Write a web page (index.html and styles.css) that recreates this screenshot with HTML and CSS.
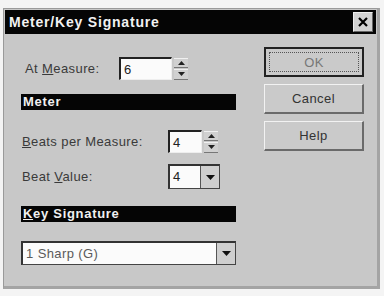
FILE: index.html
```html
<!DOCTYPE html>
<html lang="en">
<head>
    <meta charset="UTF-8">
    <title>Meter/Key Signature</title>
    <link rel="stylesheet" href="styles.css">
</head>
<body>
    <div class="dialog">
        <div class="title-bar">
            <span class="title">Meter/Key Signature</span>
            <span class="close-btn">
                <svg width="10" height="10" viewBox="0 0 10 10"><path d="M1 1 L9 9 M9 1 L1 9" stroke="#000" stroke-width="2.2"/></svg>
            </span>
        </div>

        <div class="content">
            <div class="left-col">
                <div class="row row-measure">
                    <span class="label label-measure">At <u>M</u>easure:</span>
                    <span class="field field-measure">6</span>
                    <span class="spinner">
                        <span class="spin-half"><svg width="7" height="4" viewBox="0 0 7 4"><path d="M0 4 L3.5 0 L7 4 Z" fill="#222"/></svg></span>
                        <span class="spin-half"><svg width="7" height="4" viewBox="0 0 7 4"><path d="M0 0 L3.5 4 L7 0 Z" fill="#222"/></svg></span>
                    </span>
                </div>

                <div class="group-bar bar-meter">Meter</div>

                <div class="row row-beats">
                    <span class="label label-wide"><u>B</u>eats per Measure:</span>
                    <span class="field field-small">4</span>
                    <span class="spinner">
                        <span class="spin-half"><svg width="7" height="4" viewBox="0 0 7 4"><path d="M0 4 L3.5 0 L7 4 Z" fill="#222"/></svg></span>
                        <span class="spin-half"><svg width="7" height="4" viewBox="0 0 7 4"><path d="M0 0 L3.5 4 L7 0 Z" fill="#222"/></svg></span>
                    </span>
                </div>

                <div class="row row-value">
                    <span class="label label-wide">Beat <u>V</u>alue:</span>
                    <span class="combo combo-small">
                        <span class="combo-text">4</span>
                        <span class="drop-btn"><svg width="9" height="5" viewBox="0 0 9 5"><path d="M0 0 L4.5 5 L9 0 Z" fill="#111"/></svg></span>
                    </span>
                </div>

                <div class="group-bar bar-key"><u>K</u>ey Signature</div>

                <div class="combo combo-wide">
                    <span class="combo-text key-text">1 Sharp (G)</span>
                    <span class="drop-btn"><svg width="9" height="5" viewBox="0 0 9 5"><path d="M0 0 L4.5 5 L9 0 Z" fill="#111"/></svg></span>
                </div>
            </div>

            <div class="right-col">
                <div class="btn btn-default"><span class="focus-ring">OK</span></div>
                <div class="btn">Cancel</div>
                <div class="btn">Help</div>
            </div>
        </div>
    </div>
</body>
</html>
```

FILE: styles.css
```css
body {
    margin: 0;
    background: #f4f4f4;
    font-family: "Liberation Sans", Arial, sans-serif;
    font-size: 13px;
    letter-spacing: 0.4px;
    color: #333;
}

.dialog {
    margin: 8px 4px 0 3px;
    height: 281px;
    background: #c8c8c8;
    border: 1px solid #9a9a9a;
    border-right: 3px solid #a4a4a4;
    border-bottom: 3px solid #a4a4a4;
    box-sizing: border-box;
    padding: 1px;
}

.title-bar {
    height: 24px;
    background: #050505;
    display: flex;
    align-items: center;
    justify-content: space-between;
    padding: 0 3px 0 4px;
}

.title {
    color: #f2f2f2;
    font-weight: bold;
    font-size: 14px;
    letter-spacing: 0.8px;
}

.close-btn {
    width: 18px;
    height: 18px;
    background: #d2d2d2;
    border: 1px solid #eee;
    border-right-color: #666;
    border-bottom-color: #666;
    display: flex;
    align-items: center;
    justify-content: center;
}

.content {
    display: flex;
    padding: 0 0 0 16px;
}

.left-col {
    width: 215px;
    display: flex;
    flex-direction: column;
}

.right-col {
    margin-left: 28px;
    padding-top: 13px;
    display: flex;
    flex-direction: column;
    gap: 7px;
}

.row {
    display: flex;
    align-items: center;
}

.row-measure {
    margin-top: 23px;
}

.label {
    color: #3a3a3a;
}

.label u {
    text-decoration-thickness: 1px;
}

.label-measure {
    width: 94px;
    padding-left: 4px;
}

.label-wide {
    width: 146px;
    padding-left: 1px;
}

.field {
    height: 23px;
    background: #fbfbfb;
    border-top: 2px solid #222;
    border-left: 2px solid #222;
    border-right: 1px solid #eee;
    border-bottom: 1px solid #eee;
    box-sizing: border-box;
    padding: 3px 0 0 3px;
    color: #222;
}

.field-measure {
    width: 53px;
}

.field-small {
    width: 34px;
}

.spinner {
    width: 14px;
    height: 22px;
    margin-left: 2px;
    display: flex;
    flex-direction: column;
    gap: 1px;
}

.spin-half {
    flex: 1;
    background: #d0d0d0;
    border-top: 1px solid #f0f0f0;
    border-bottom: 1px solid #777;
    display: flex;
    align-items: center;
    justify-content: center;
}

.group-bar {
    height: 16px;
    background: #050505;
    color: #f0f0f0;
    font-weight: bold;
    font-size: 13px;
    letter-spacing: 0.7px;
    line-height: 16px;
    padding-left: 2px;
}

.bar-meter {
    margin-top: 14px;
}

.row-beats {
    margin-top: 20px;
}

.row-value {
    margin-top: 11px;
}

.bar-key {
    margin-top: 17px;
}

.combo {
    height: 25px;
    display: flex;
    background: #fbfbfb;
    border-top: 2px solid #333;
    border-left: 2px solid #333;
    border-right: 1px solid #444;
    border-bottom: 1px solid #444;
    box-sizing: border-box;
}

.combo-small {
    width: 52px;
}

.combo-wide {
    margin-top: 19px;
    height: 24px;
}

.combo-text {
    flex: 1;
    padding: 3px 0 0 3px;
    color: #222;
}

.key-text {
    color: #5a5a5a;
}

.drop-btn {
    width: 18px;
    background: #cfcfcf;
    border-left: 1px solid #555;
    display: flex;
    align-items: center;
    justify-content: center;
}

.btn {
    width: 100px;
    height: 30px;
    box-sizing: border-box;
    background: #cacaca;
    border: 1px solid #f2f2f2;
    border-right: 2px solid #6a6a6a;
    border-bottom: 2px solid #6a6a6a;
    display: flex;
    align-items: center;
    justify-content: center;
    color: #333;
}

.btn-default {
    border: 2px solid #222;
    padding: 3px;
}

.focus-ring {
    width: 100%;
    height: 100%;
    border: 1px dotted #555;
    box-sizing: border-box;
    display: flex;
    align-items: center;
    justify-content: center;
    color: #777;
}
```
